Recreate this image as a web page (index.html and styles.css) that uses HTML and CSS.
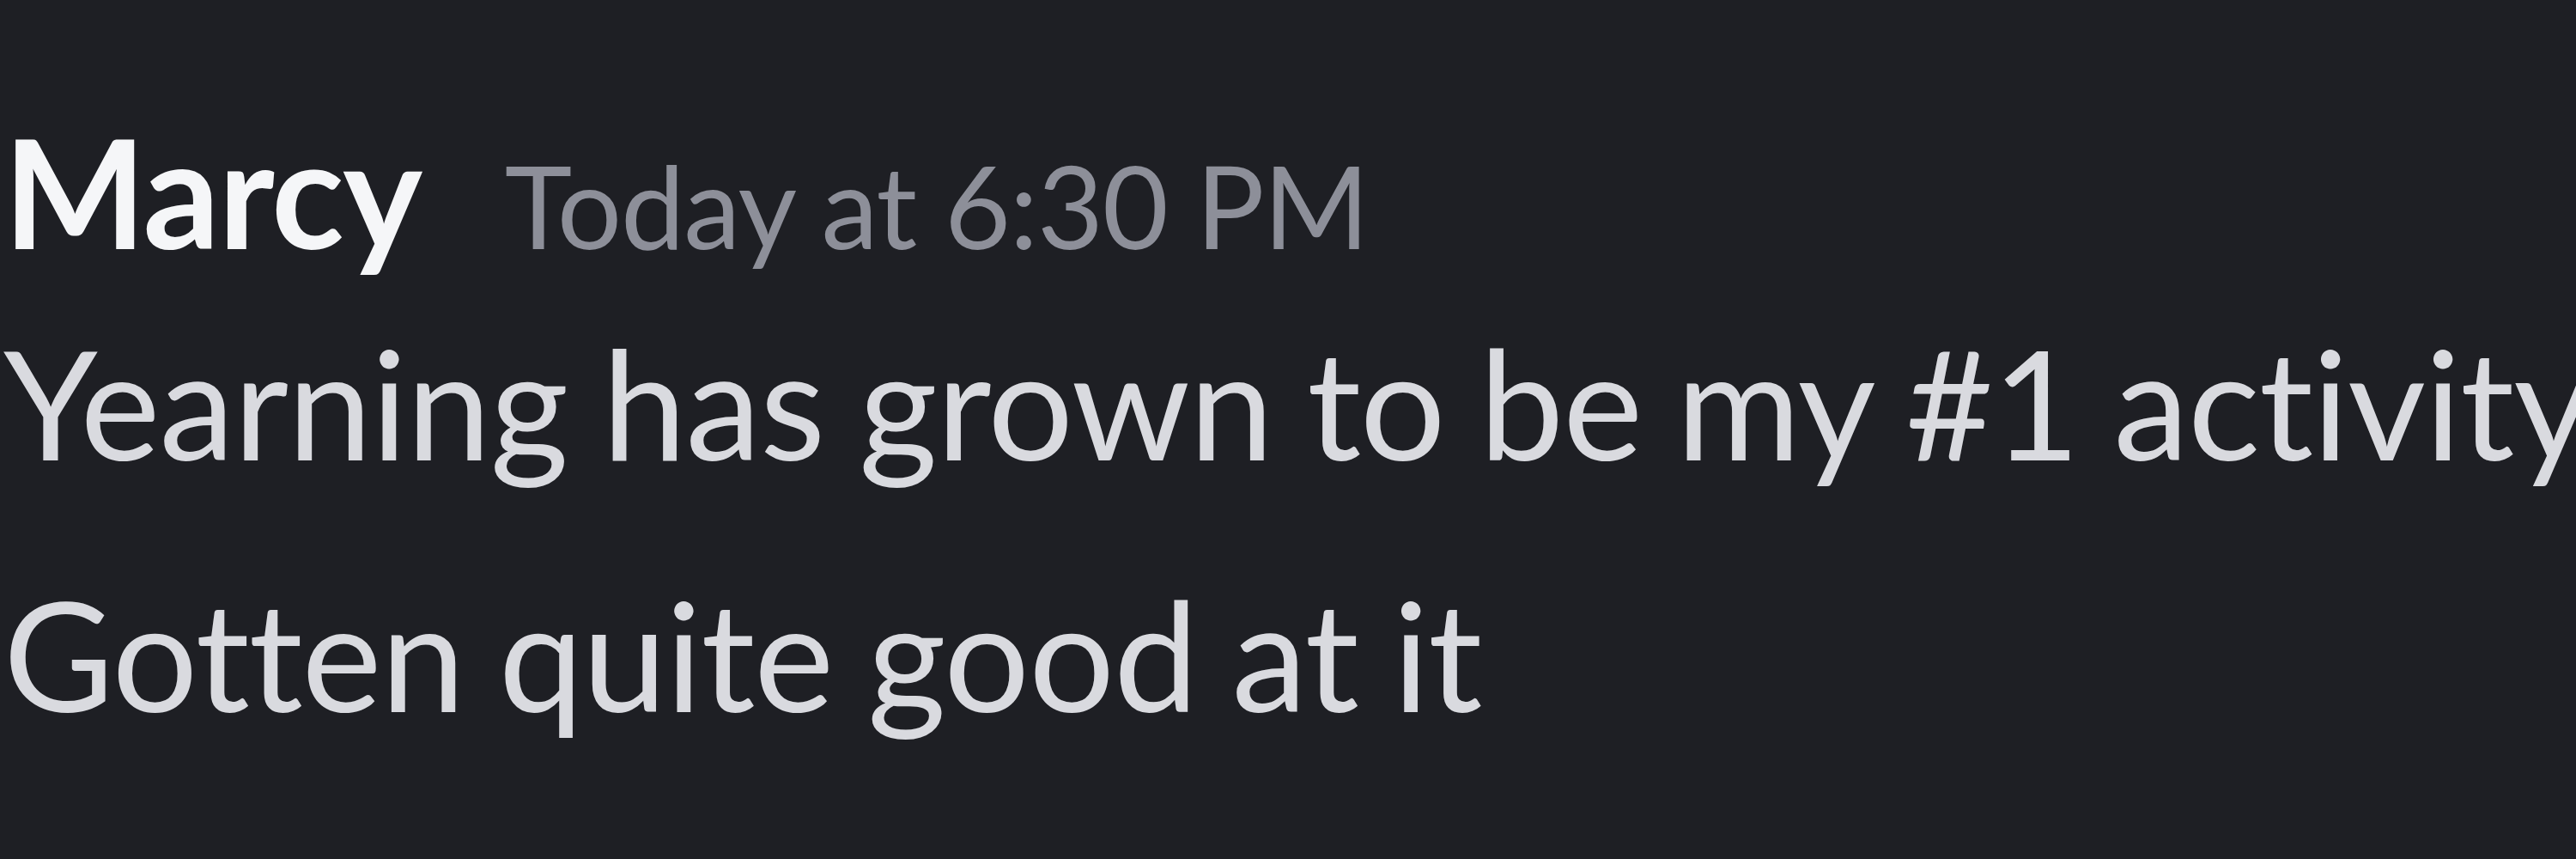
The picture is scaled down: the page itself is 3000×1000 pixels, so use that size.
FILE: index.html
```html
<!DOCTYPE html>
<html lang="en">
<head>
  <meta charset="UTF-8">
  <meta name="viewport" content="width=device-width, initial-scale=1.0">
  <title>Marcy</title>
  <link rel="stylesheet" href="styles.css">
</head>
<body>
  <div class="chat">
    <div class="message-group">
      <div class="header">
        <span class="username">Marcy</span>
        <span class="timestamp">Today at 6:30 PM</span>
      </div>
      <div class="message">Yearning has grown to be my #1 activity</div>
      <div class="message">Gotten quite good at it</div>
    </div>
  </div>
</body>
</html>
```

FILE: styles.css
```css
html, body {
  margin: 0;
  height: 100%;
  overflow: hidden;
}

body {
  font-family: Lato, "Noto Sans", sans-serif;
  background-color: #1e1f24;
  color: #d9dadf;
}

.chat {
  padding: 123px 0 0 4px;
}

.message-group {
  white-space: nowrap;
}

.header {
  font-size: 176px;
  line-height: 198px;
}

.username {
  color: #f5f6f8;
  font-weight: bold;
  letter-spacing: -1.5px;
}

.timestamp {
  margin-left: 52px;
  font-size: 133px;
  line-height: 1;
  color: #8d8f99;
  letter-spacing: -1.2px;
}

.message {
  font-size: 176px;
  line-height: 293px;
  letter-spacing: -1px;
  word-spacing: -4px;
}
```
